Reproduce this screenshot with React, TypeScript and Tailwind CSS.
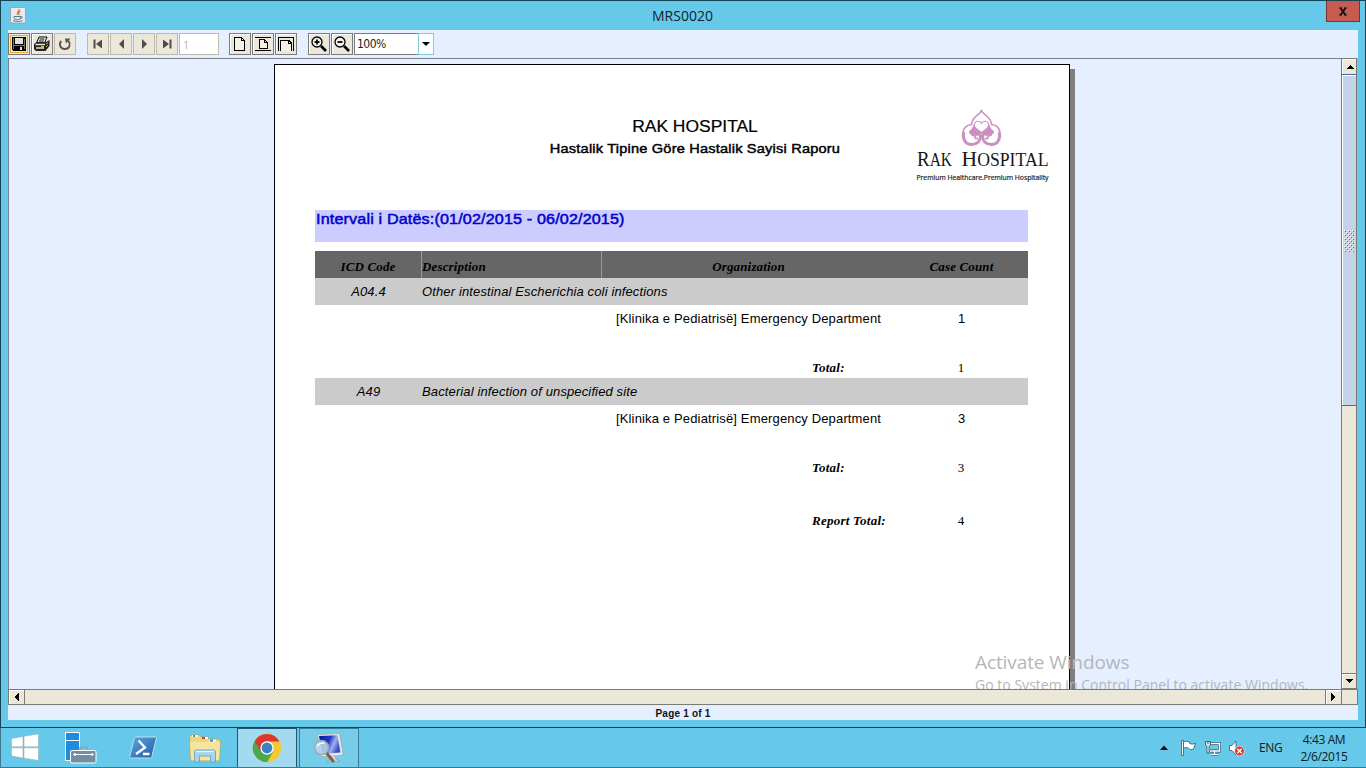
import type { ReactNode } from 'react';

const SANS = "font-['Liberation_Sans',sans-serif]";
const SERIF = "font-['Liberation_Serif',serif]";
const UI = "font-['Open_Sans','Noto_Sans',sans-serif]";

function ToolButton({ disabled, focused, children }: { disabled?: boolean; focused?: boolean; children: ReactNode }) {
  const look = focused
    ? 'border-[#77777a] shadow-[inset_0_0_0_1px_#fbe6bd,inset_0_0_0_2px_#eda63c]'
    : disabled
      ? 'border-[#bdbaab]'
      : 'border-[#7c7c7c] shadow-[inset_1px_1px_0_#fff]';
  return (
    <button className={`flex h-[22px] w-[22px] shrink-0 items-center justify-center border bg-[#ebe8d9] ${look}`}>
      {children}
    </button>
  );
}

function NavIcon({ d }: { d: string }) {
  return (
    <svg width="18" height="18" viewBox="0 0 18 18" fill="#4c4c4c">
      <path d={d} />
    </svg>
  );
}

function PageIcon({ kind }: { kind: 'full' | 'fit' | 'width' }) {
  return (
    <svg width="18" height="18" viewBox="0 0 18 18" fill="none" stroke="#000" strokeWidth="1" shapeRendering="crispEdges">
      {kind === 'full' && (
        <>
          <path d="M3.500 2.500h7l3 3v10h-10z" fill="#f4f2e8" />
          <path d="M10.500 2.500v3h3" />
        </>
      )}
      {kind === 'fit' && (
        <>
          <path d="M1 2.500h16M1 15.500h16" />
          <path d="M5.500 4.500h5l3 3v6h-8z" fill="#f4f2e8" />
          <path d="M10.500 4.500v3h3" />
        </>
      )}
      {kind === 'width' && (
        <>
          <path d="M1.500 16v-14h15v14" />
          <path d="M3.500 16v-11h8l3 3v8" fill="#f4f2e8" />
          <path d="M11.500 5v3h3" />
        </>
      )}
    </svg>
  );
}

function Zoom({ plus }: { plus?: boolean }) {
  return (
    <svg width="20" height="20" viewBox="0 0 20 20" fill="none" stroke="#000">
      <circle cx="8" cy="8" r="5" strokeWidth="1.300" fill="#f6f4ea" />
      <path d="M5.500 8h5" strokeWidth="1.800" />
      {plus && <path d="M8 5.500v5" strokeWidth="1.800" />}
      <path d="M12 12l5 5" strokeWidth="2.600" />
    </svg>
  );
}

function Toolbar() {
  return (
    <div className="flex h-7 shrink-0 items-start bg-[#e6efff] pt-[3px]">
      <div className="flex gap-px">
        <ToolButton focused>
          <svg width="14" height="14" viewBox="0 0 14 14" shapeRendering="crispEdges">
            <path d="M0 0h14v14H1l-1-1z" fill="#000" />
            <path d="M3 1h8v6H3z" fill="#e3e1d5" />
            <path d="M1 1h1v11H1zM12 2h1v10h-1zM2 8h10v1H2z" fill="#75756b" />
            <path d="M8 10h2v3H8z" fill="#e8e6da" />
          </svg>
        </ToolButton>
        <ToolButton>
          <svg width="18" height="18" viewBox="0 0 18 18">
            <path d="M6 2h8l-2.500 6H3.500z" fill="#fff" stroke="#000" />
            <path d="M6.500 4h5M5.800 6h5" stroke="#000" />
            <path d="M1 9l3-2h9l3.500-2v6l-4 5H3l-2-2z" fill="#24241f" />
            <path d="M2.500 9.500h9.500M3 13h8" stroke="#e6e2d1" strokeWidth="1.600" />
            <path d="M13 9l2-1.500M13 12l2-2" stroke="#a9a594" />
            <path d="M8 11.500h3" stroke="#cfd02a" />
          </svg>
        </ToolButton>
        <ToolButton disabled>
          <svg width="16" height="16" viewBox="0 0 16 16" fill="none" stroke="#55554d" strokeWidth="1.900">
            <path d="M4.200 5C1.500 8 3.200 13 7.800 13s6.300-4.500 3.700-8.200" />
            <path d="M8 2.500h5.500L9 7.500z" fill="#55554d" stroke="none" />
          </svg>
        </ToolButton>
      </div>
      <div className="ml-[11px] flex gap-px">
        <ToolButton disabled><NavIcon d="M4.500 4.500h2v9h-2zM13 4.500v9L7 9z" /></ToolButton>
        <ToolButton disabled><NavIcon d="M12 4v10L7 9z" /></ToolButton>
        <ToolButton disabled><NavIcon d="M7 4v10l5-5z" /></ToolButton>
        <ToolButton disabled><NavIcon d="M5 4.500v9L11 9zM11.500 4.500h2v9h-2z" /></ToolButton>
        <div className={`h-[22px] w-10 border border-[#bdbaab] bg-white pl-[3px] text-[11px] leading-[21px] text-[#b5b3a8] ${UI}`}>1</div>
      </div>
      <div className="ml-[10px] flex gap-px">
        <ToolButton><PageIcon kind="full" /></ToolButton>
        <ToolButton><PageIcon kind="fit" /></ToolButton>
        <ToolButton><PageIcon kind="width" /></ToolButton>
      </div>
      <div className="ml-[11px] flex gap-px">
        <ToolButton><Zoom plus /></ToolButton>
        <ToolButton><Zoom /></ToolButton>
        <div className="flex h-[22px] w-[80px]">
          <div className="w-16 border border-r-0 border-[#7c7c7c] bg-white pl-[2px] font-['DejaVu_Sans_Condensed','DejaVu_Sans',sans-serif] text-[12px] leading-[21px] tracking-[-0.5px] text-[#222]">100%</div>
          <div className="flex w-4 items-center justify-center border border-[#83cdde] bg-white">
            <svg width="8" height="4" viewBox="0 0 8 4"><path d="M0 0h8L4 4z" /></svg>
          </div>
        </div>
      </div>
    </div>
  );
}

function Logo() {
  return (
    <svg width="136" height="78" viewBox="0 0 136 78">
      <g fill="none" stroke="#cb8fc0" strokeLinecap="round">
        <path d="M66.500 3.500C65.500 8 57 9 56.500 17.500C51 18 47.500 22 48.500 27" strokeWidth="1.500" />
        <path d="M66.500 3.500C67.500 8 76 9 76.500 17.500C82 18 85.500 22 84.500 27" strokeWidth="1.500" />
        <path d="M48.500 26C47.500 33 51 37.500 56.500 37.500C62 37.500 65.500 34 65.500 29" strokeWidth="3" />
        <path d="M84.500 26C85.500 33 82 37.500 76.500 37.500C71 37.500 67.500 34 67.500 29" strokeWidth="3" />
        <path d="M65.500 29c-2-2.500-6-1.500-5.500 1.500.3 1.200 1.500 1.500 2.300.8" strokeWidth="1.700" />
        <path d="M67.500 29c2-2.500 6-1.500 5.500 1.500-.3 1.200-1.500 1.500-2.300.8" strokeWidth="1.700" />
      </g>
      <g fill="#cb8fc0">
        <path d="M59 17.500c-1.500 2.500-2 5-3.500 5.500-2 .5-2 4 .3 4.200.2 2.300 2.700 2.800 4 1.300 2-2 5-1.500 6.500.8v-4.300z" />
        <path d="M74 17.500c1.500 2.500 2 5 3.500 5.500 2 .5 2 4-.3 4.200-.2 2.300-2.700 2.800-4 1.300-2-2-5-1.500-6.500.8v-4.300z" />
      </g>
      <path d="M66.500 26c-1.500-2.500-6-3.500-7-6.500-.9-3 1.200-5.300 3.500-5.300 1.800 0 3 .8 3.500 2.200.5-1.400 1.700-2.200 3.500-2.200 2.300 0 4.400 2.300 3.500 5.300-1 3-5.500 4-7 6.500z" fill="#fff" stroke="#cb8fc0" strokeWidth="1.100" />
      <g className={SERIF} fill="#171717">
        <text x="2" y="58.500" fontSize="22" textLength="35" lengthAdjust="spacingAndGlyphs">R<tspan fontSize="18">AK</tspan></text>
        <text x="46.500" y="58.500" fontSize="22" textLength="87" lengthAdjust="spacingAndGlyphs">H<tspan fontSize="18">OSPITAL</tspan></text>
      </g>
      <text className="font-['Open_Sans',sans-serif]" x="1.500" y="73" fontSize="7" fill="#222" stroke="#222" strokeWidth="0.200" textLength="132" lengthAdjust="spacingAndGlyphs">
        Premium Healthcare.Premium Hospitality
      </text>
    </svg>
  );
}

function Group({ code, name, count }: { code: string; name: string; count: string }) {
  return (
    <>
      <div className={`flex h-[27px] bg-[#cbcbcb] text-[13px] italic leading-[27px] tracking-[0.13px] ${SANS}`}>
        <div className="w-[107px] text-center">{code}</div>
        <div>{name}</div>
      </div>
      <div className={`flex h-[51px] pt-[6px] text-[13px] leading-[15px] ${SANS}`}>
        <div className="ml-[301px] w-[293px] tracking-[0.15px]">[Klinika e Pediatrisë] Emergency Department</div>
        <div className="w-[105px] text-center">{count}</div>
      </div>
      <TotalRow label="Total:" value={count} />
    </>
  );
}

function TotalRow({ label, value }: { label: string; value: string }) {
  return (
    <div className={`flex h-[22px] pt-1 text-[13px] leading-[15px] ${SERIF}`}>
      <div className="ml-[497px] w-[97px] font-bold italic tracking-[0.25px]">{label}</div>
      <div className="w-[104px] text-center">{value}</div>
    </div>
  );
}

function Report() {
  return (
    <div className="ml-[265px] mt-[5px] flex h-[626px] items-start">
      <div className="h-full w-[796px] border-x border-t border-black bg-white px-[40px] text-black">
        <header className="flex h-[145px] justify-end">
          <div className={`mt-[52px] w-[292px] whitespace-nowrap text-center ${SANS}`}>
            <h1 className="scale-x-[1.09] text-[16px] leading-5 [-webkit-text-stroke:0.2px_#000]">RAK HOSPITAL</h1>
            <h2 className="mt-[3px] scale-x-[1.12] text-[13px] leading-[18px] tracking-[0.18px] [-webkit-text-stroke:0.45px_#000]">Hastalik Tipine Göre Hastalik Sayisi Raporu</h2>
          </div>
          <div className="-mr-[22px] ml-[74px] mt-[42px] w-[136px]"><Logo /></div>
        </header>
        <div className={`h-8 w-[713px] bg-[#ccccff] text-[15px] leading-[18px] text-[#0000d0] [-webkit-text-stroke:0.5px_#0000d0] ${SANS}`}>
          <div className="w-fit origin-left scale-x-[1.075] pl-px tracking-[0.14px]">Intervali i Datës:(01/02/2015 - 06/02/2015)</div>
        </div>
        <div className="mt-[9px] w-[713px]">
          <div className={`flex h-[27px] bg-[#666] text-[13px] font-bold italic leading-[31px] tracking-[0.15px] ${SERIF}`}>
            <div className="w-[107px] border-r border-[#999] text-center">ICD Code</div>
            <div className="w-[180px] border-r border-[#999]">Description</div>
            <div className="w-[293px] text-center">Organization</div>
            <div className="w-[133px] text-center">Case Count</div>
          </div>
          <Group code="A04.4" name="Other intestinal Escherichia coli infections" count="1" />
          <Group code="A49" name="Bacterial infection of unspecified site" count="3" />
          <div className="mt-[31px]"><TotalRow label="Report Total:" value="4" /></div>
        </div>
      </div>
      <div className="mt-[5px] h-full w-[5px] bg-[#7f7f7f]" />
    </div>
  );
}

function Arrow({ d, w, h }: { d: string; w: number; h: number }) {
  return <svg width={w} height={h} viewBox={`0 0 ${w} ${h}`} shapeRendering="crispEdges"><path d={d} /></svg>;
}

function Viewer() {
  return (
    <div className="flex h-[631px] shrink-0">
      <div className="relative w-[1333px] overflow-hidden border-l border-t border-[#7b818a] bg-[#e6efff]">
        <Report />
        <div className={`absolute left-[966px] top-[591px] whitespace-nowrap text-[#b4b6ba] ${UI}`}>
          <div className="text-[19px] leading-6 tracking-[-0.1px]">Activate Windows</div>
          <div className="text-[14px] leading-[22px] tracking-[0.02px]">Go to System in Control Panel to activate Windows.</div>
        </div>
      </div>
      <div className="flex w-4 flex-col border-x border-t border-[#7b7b72] bg-[#ebe8d9]">
        <div className="flex h-[15px] items-center justify-center border-l border-t border-white"><Arrow d="M0 4L4 0l4 4z" w={8} h={4} /></div>
        <div className="flex h-[332px] justify-center border-y border-[#49699c] bg-[#c3d3e8] pt-[155px] shadow-[inset_1px_1px_0_#fff]">
          <svg width="10" height="22" shapeRendering="crispEdges">
            <defs>
              <pattern id="grip" width="4" height="4" patternUnits="userSpaceOnUse">
                <path d="M0 0h1v1H0zM2 2h1v1H2z" fill="#fff" />
                <path d="M1 1h1v1H1zM3 3h1v1H3z" fill="#4a6fb0" />
              </pattern>
            </defs>
            <rect width="10" height="22" fill="url(#grip)" />
          </svg>
        </div>
        <div className="flex-1" />
        <div className="flex h-4 items-center justify-center border-y border-b-[#7b7b72] border-t-[#7b7b72] shadow-[inset_1px_1px_0_#fff]"><Arrow d="M0 0h8L4 4z" w={8} h={4} /></div>
      </div>
    </div>
  );
}

function Tray() {
  return (
    <div className={`ml-auto flex items-center text-[#0d1b24] ${UI}`}>
      <svg width="8" height="5" viewBox="0 0 8 5"><path d="M0 5l4-4.500L8 5z" fill="#111" /></svg>
      <svg className="ml-[12px]" width="18" height="18" viewBox="0 0 18 18" fill="#fff" stroke="#2c5a70" strokeWidth=".8">
        <path d="M1.500 1.500h2v15h-2z" />
        <path d="M3.500 3c2-1 4-1 6 0v1.500c2 .8 4 .8 6-.3l-2 6c-2 .8-4 .6-5-1-2-1-3.500-.8-5 0z" />
      </svg>
      <svg className="ml-[6px]" width="18" height="18" viewBox="0 0 18 18" fill="none">
        <path d="M7 4.500h8.500v7.500H6M10.500 12v3M7 15.500h7.500" stroke="#2c5a70" strokeWidth="2.800" />
        <path d="M7 4.500h8.500v7.500H6M10.500 12v3M7 15.500h7.500" stroke="#fff" strokeWidth="1.500" />
        <path d="M1.500 2.500h5v3.500l-1.500 1v7H3V7L1.500 6z" fill="#fff" stroke="#2c5a70" strokeWidth=".9" />
        <path d="M3.300 3v2.500M4.800 3v2.500" stroke="#2c5a70" strokeWidth=".7" />
      </svg>
      <svg className="ml-[6px]" width="18" height="18" viewBox="0 0 18 18">
        <path d="M1.500 6.500H4L8 2v14l-4-4.500H1.500z" fill="#fff" stroke="#2c5a70" strokeWidth=".8" />
        <circle cx="11.500" cy="12" r="4.900" fill="#d33a34" stroke="#fff" strokeWidth=".6" />
        <path d="M9.300 9.800l4.400 4.400m0-4.400l-4.400 4.400" stroke="#fff" strokeWidth="1.500" />
      </svg>
      <div className="ml-[13px] w-6 pt-px text-[12px] tracking-[-0.3px]">ENG</div>
      <div className="ml-[14px] mr-[15px] w-[54px] whitespace-nowrap text-center text-[12px] leading-[17px] tracking-[-0.4px]">
        4:43 AM<br />2/6/2015
      </div>
    </div>
  );
}

function Taskbar() {
  return (
    <div className="flex h-10 items-stretch border-b border-l border-[#3e7890] bg-[#66c9e9]">
      <div className="flex w-[47px] items-center justify-center">
        <svg width="28" height="27" viewBox="0 0 28 27" fill="#fff" stroke="#8ba9b5" strokeWidth=".5">
          <path d="M.5 4.500l11.500-2v10.300H.5zM13 2.300L27.500 0v12.800H13zM.5 13.800H12V24L.5 22zM13 13.800h14.500v12.700L13 24.200z" />
        </svg>
      </div>
      <div className="flex w-[64px] items-start justify-center pt-[2px]">
        <svg width="34" height="34" viewBox="0 0 34 34">
          <path d="M2.500 2.500h14v28h-14z" fill="#1f8bdc" stroke="#fff" />
          <path d="M2.500 10.500h14" stroke="#fff" />
          <path d="M17 20v-2.500h7V20" fill="none" stroke="#8fa3b0" strokeWidth="1.600" />
          <rect x="7.500" y="20.500" width="25.500" height="12.500" rx="1.500" fill="#748ea1" stroke="#fff" />
          <path d="M10 24.500h21" stroke="#fff" /><path d="M12 23v3M29 23v3" stroke="#fff" strokeWidth="1.500" />
        </svg>
      </div>
      <div className="flex w-[62px] items-center justify-center">
        <svg width="30" height="26" viewBox="0 0 30 26">
          <defs><linearGradient id="ps" x1="0" y1="0" x2="1" y2="1"><stop stopColor="#63a8dc" /><stop offset="1" stopColor="#1d59a8" /></linearGradient></defs>
          <path d="M8 2h19c1 0 1.500.6 1.300 1.500l-4.500 18c-.2 1-.8 1.500-1.800 1.500H3c-1 0-1.500-.6-1.300-1.500l4.500-18C6.500 2.500 7 2 8 2z" fill="url(#ps)" stroke="#bce0f0" />
          <path d="M10.500 5.500l6.500 7-9 6.500M15 19h6.500" fill="none" stroke="#fff" strokeWidth="2.300" />
        </svg>
      </div>
      <div className="flex w-[62px] items-center justify-center">
        <svg width="34" height="30" viewBox="0 0 34 30">
          <path d="M1.500 4l1-2h9l2 2h6l1 2h10l2 2-1 19.500H2.500z" fill="#eed680" stroke="#b69c54" strokeWidth=".7" />
          <path d="M4 3h6M14 5h6M21 7.500h7" stroke="#fff" strokeWidth="1.800" />
          <path d="M5 3h2" stroke="#36a542" strokeWidth="2" /><path d="M14 5h3" stroke="#d54030" strokeWidth="2" /><path d="M22 7.500h3" stroke="#397cc0" strokeWidth="2" />
          <path d="M2 9h30l-1 18.500H3z" fill="#f6e49f" />
          <path d="M6.500 29V19c0-1.500 1-2 2-2h17c1 0 2 .6 2 2v10h-5v-6h-11v6z" fill="#a5d6eb" stroke="#5b9dbc" strokeWidth=".8" />
          <path d="M8 18.500h18" stroke="#e5f6fc" strokeWidth="1.300" />
        </svg>
      </div>
      <div className="ml-px flex w-[60px] items-center justify-center border border-b-0 border-[#23576b] bg-[#a2dbf0]">
        <svg width="30" height="30" viewBox="0 0 30 30">
          <circle cx="15" cy="15" r="14.200" fill="#f3c92f" />
          <path d="M15 15L2.700 7.900A14.200 14.200 0 0 0 15 29.200L21.200 18.600z" fill="#4aa94a" />
          <path d="M2.700 7.900A14.200 14.200 0 0 1 27.500 8.500H15L8.800 18.600z" fill="#d9392e" />
          <circle cx="15" cy="15" r="6.700" fill="#fff" /><circle cx="15" cy="15" r="5.400" fill="#3d7fc4" />
        </svg>
      </div>
      <div className="ml-[2px] flex w-[60px] items-center justify-center border-x border-t border-[#3a7c95] bg-[#75cdea] pr-[3px]">
        <svg width="32" height="32" viewBox="0 0 32 32">
          <defs>
            <linearGradient id="screen" x1="0" y1="0" x2="1" y2="0.400">
              <stop offset=".1" stopColor="#0d1fa8" />
              <stop offset=".5" stopColor="#2338c8" />
              <stop offset=".75" stopColor="#9fb0ee" />
              <stop offset="1" stopColor="#3b52d0" />
            </linearGradient>
          </defs>
          <path d="M17 24l6-1 1 4 4 2-13 1 3-2z" fill="#d5d8da" stroke="#858b90" strokeWidth=".5" />
          <path d="M5.500 2.500l22-1 3.500 20-2 2-20 1z" fill="#e9eae4" stroke="#999" strokeWidth=".6" />
          <path d="M7 4l18.500-.8 3 17.300-18 1.500z" fill="url(#screen)" />
          <path d="M14.500 21l6.500 8" stroke="#84603d" strokeWidth="3" strokeLinecap="round" />
          <circle cx="9.500" cy="15.500" r="7" fill="#b8d3e7" fillOpacity=".9" stroke="#9aabb8" strokeWidth="1.500" />
          <path d="M5.500 14.500c1-3 4-4 7-3" fill="none" stroke="#fff" strokeWidth="1.500" />
        </svg>
      </div>
      <Tray />
    </div>
  );
}

export default function App() {
  return (
    <div className="h-[768px] w-[1366px] overflow-hidden bg-[#66c9e9]">
      <div className="flex h-[728px] flex-col border border-[#174454] bg-[#66c9e9] px-[7px]">
        <div className="flex h-[29px] shrink-0 justify-between">
          <div className="flex w-[100px] pl-[2px] pt-[6px]">
            <svg width="16" height="17" viewBox="0 0 16 17">
              <rect x=".5" y=".5" width="15" height="15.500" rx="1.500" fill="#e9ecee" stroke="#9ca8af" />
              <path d="M9 2c1 2-3 3-1.500 6M10.500 4c-2 1-2.500 2-1 4" fill="none" stroke="#e07b30" strokeWidth="1.300" />
              <path d="M4 9.500h6.500v1.500c0 1-1 1.500-3 1.500S4 12 4 11zM10.500 9.500c3-.5 2 2-.5 2M3 13.500c3 1.200 7 1.200 9.500 0" fill="none" stroke="#557b96" />
            </svg>
          </div>
          <h1 className={`pr-px pt-[5px] text-[14px] leading-5 tracking-[0px] text-[#13242c] ${UI}`}>MRS0020</h1>
          <div className="flex w-[100px] justify-end">
            <div className="-mr-[2px] flex h-[21px] w-[34px] items-center justify-center border border-t-0 border-[#79332f] bg-[#c75a51]">
              <svg width="10" height="9" viewBox="0 0 10 9"><path d="M2.500 1l5 7M7.500 1l-5 7" stroke="#151010" strokeWidth="1.900" /><path d="M1 1h3M6 1h3M1 8h3M6 8h3" stroke="#151010" strokeWidth="1.200" /></svg>
            </div>
          </div>
        </div>
        <Toolbar />
        <Viewer />
        <div className="flex h-4 shrink-0 border-y border-l border-[#7b7b72] bg-[#ebe8d9]">
          <div className="flex w-4 items-center justify-center border-r border-[#7b7b72] shadow-[inset_1px_1px_0_#fff]"><Arrow d="M5 0v8L0 4z" w={5} h={8} /></div>
          <div className="flex-1" />
          <div className="flex w-[17px] items-center justify-center border-x border-[#7b7b72] shadow-[inset_1px_1px_0_#fff]"><Arrow d="M0 0v8l5-4z" w={5} h={8} /></div>
          <div className="w-4 border-r border-[#7b7b72]" />
        </div>
        <div className={`h-[15px] shrink-0 bg-[#e6efff] text-center text-[10px] font-bold leading-[17px] tracking-[0.2px] text-[#111] ${SANS}`}>Page 1 of 1</div>
      </div>
      <Taskbar />
    </div>
  );
}
